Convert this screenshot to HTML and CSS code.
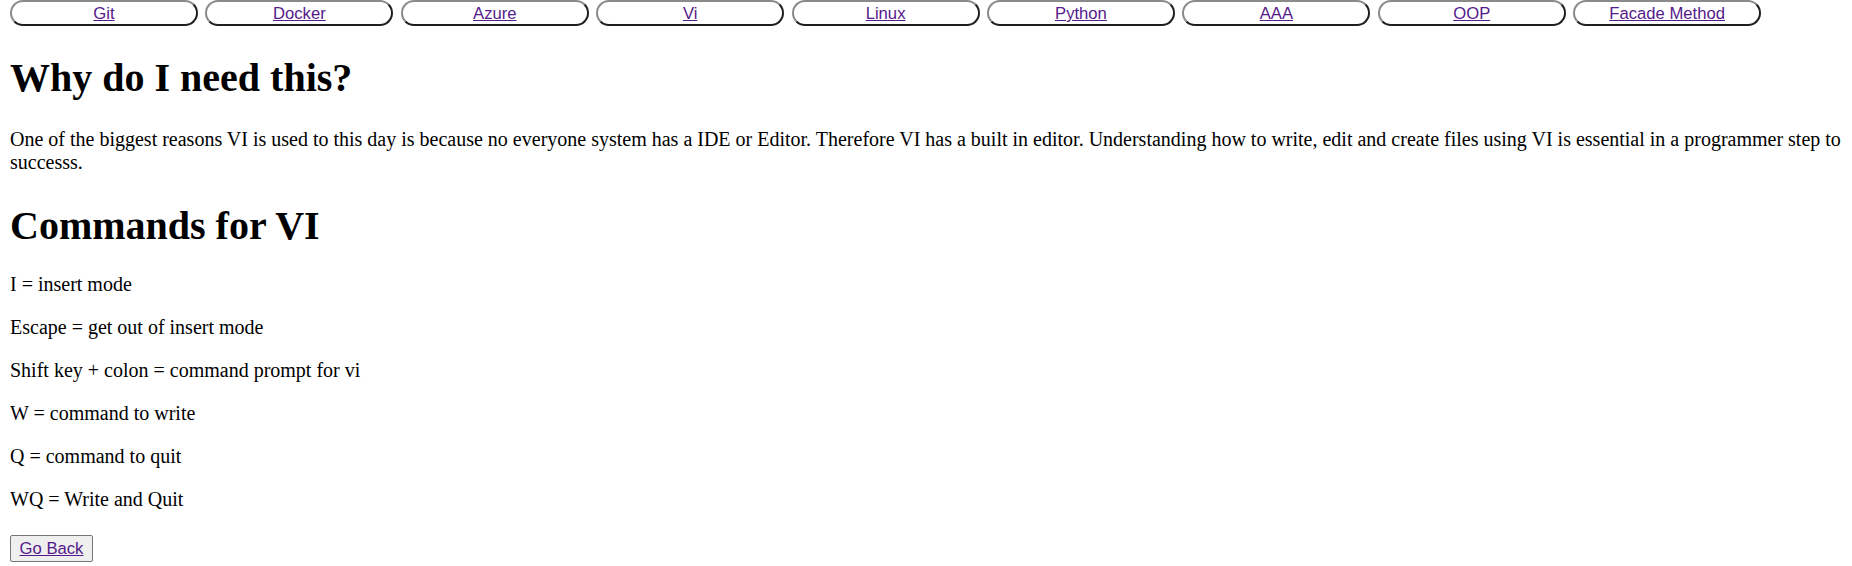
FILE: index.html
```html
<!DOCTYPE html>
<html>
<head>
<meta charset="utf-8">
<title>Vi</title>
<link rel="stylesheet" href="styles.css">
</head>
<body>
<nav class="nav">
  <span class="pill"><a href="#">Git</a></span>
  <span class="pill"><a href="#">Docker</a></span>
  <span class="pill"><a href="#">Azure</a></span>
  <span class="pill"><a href="#">Vi</a></span>
  <span class="pill"><a href="#">Linux</a></span>
  <span class="pill"><a href="#">Python</a></span>
  <span class="pill"><a href="#">AAA</a></span>
  <span class="pill"><a href="#">OOP</a></span>
  <span class="pill"><a href="#">Facade Method</a></span>
</nav>
<h1 class="title">Why do I need this?</h1>
<p class="text">One of the biggest reasons VI is used to this day is because no everyone system has a IDE or Editor. Therefore VI has a built in editor. Understanding how to write, edit and create files using VI is essential in a programmer step to successs.</p>
<h1 class="title title-tight">Commands for VI</h1>
<p class="text">I = insert mode</p>
<p class="text">Escape = get out of insert mode</p>
<p class="text">Shift key + colon = command prompt for vi</p>
<p class="text">W = command to write</p>
<p class="text">Q = command to quit</p>
<p class="text">WQ = Write and Quit</p>
<div class="back-row"><span class="back"><a href="#">Go Back</a></span></div>
</body>
</html>
```

FILE: styles.css
```css
html, body {
  background: #ffffff;
}
body {
  margin: 0 10px 10px 10px;
  font-family: "Liberation Serif", "Times New Roman", serif;
  font-size: 20px;
  color: #000;
}
a {
  color: #551a8b;
  text-decoration: underline;
}
.nav {
  display: flex;
  gap: 7.4px;
  height: 26px;
}
.pill {
  box-sizing: border-box;
  width: 188px;
  height: 26px;
  border: 2px solid;
  border-color: #8a8a8a #1e1e1e #1e1e1e #8a8a8a;
  border-radius: 13px;
  background: #ffffff;
  display: flex;
  align-items: center;
  justify-content: center;
  font-family: "Liberation Sans", Arial, sans-serif;
  font-size: 16.67px;
  line-height: 19px;
  padding-top: 1px;
}
.title {
  font-size: 40px;
  font-weight: bold;
  margin: 28px 0 26.8px 0;
}
.title-tight {
  margin-bottom: 24.5px;
}
.text {
  margin: 20px 0;
  line-height: 23px;
}
.back-row {
  display: flex;
  margin-top: 24px;
}
.back {
  box-sizing: border-box;
  display: flex;
  align-items: center;
  justify-content: center;
  width: 83px;
  height: 27px;
  background: #efefef;
  border: 1px solid #767676;
  border-radius: 2px;
  font-family: "Liberation Sans", Arial, sans-serif;
  font-size: 16.67px;
  line-height: 19px;
}
```
